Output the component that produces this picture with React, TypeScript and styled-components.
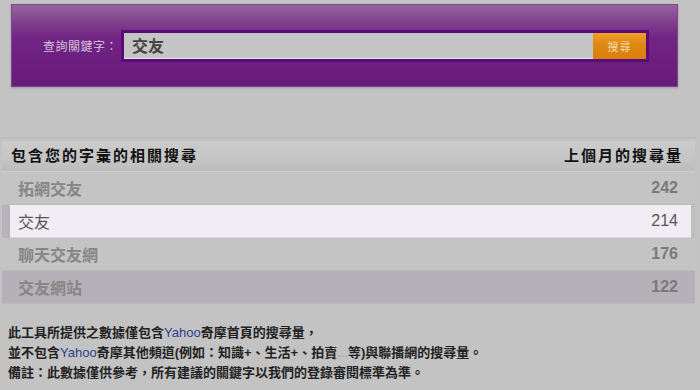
import styled, { createGlobalStyle } from "styled-components";

const GlobalStyle = createGlobalStyle`
  body {
    margin: 0;
    padding-top: 4px;
    background: #c3c3c3;
    font-family: "Liberation Sans", "Noto Sans CJK TC", sans-serif;
  }
`;

type Keyword = {
  term: string;
  count: number;
  variant: "plain" | "active" | "dark";
};

const keywords: Keyword[] = [
  { term: "拓網交友", count: 242, variant: "plain" },
  { term: "交友", count: 214, variant: "active" },
  { term: "聊天交友網", count: 176, variant: "plain" },
  { term: "交友網站", count: 122, variant: "dark" },
];

export default function App() {
  return (
    <>
      <GlobalStyle />
      <SearchPanel>
        <Label>查詢關鍵字：</Label>
        <SearchBox>
          <SearchInput defaultValue="交友" />
          <SearchButton>搜尋</SearchButton>
        </SearchBox>
      </SearchPanel>

      <Table>
        <HeaderRow>
          <HeaderCell>包含您的字彙的相關搜尋</HeaderCell>
          <HeaderCell>上個月的搜尋量</HeaderCell>
        </HeaderRow>
        {keywords.map((k) => (
          <Row key={k.term} $variant={k.variant}>
            <Term $active={k.variant === "active"}>{k.term}</Term>
            <Count $active={k.variant === "active"}>{k.count}</Count>
          </Row>
        ))}
      </Table>

      <Notes>
        <p>
          此工具所提供之數據僅包含<Brand>Yahoo</Brand>奇摩首頁的搜尋量，
        </p>
        <p>
          並不包含<Brand>Yahoo</Brand>奇摩其他頻道(例如：知識+、生活+、拍賣<Dim>...</Dim>等)與聯播網的搜尋量。
        </p>
        <p>備註：此數據僅供參考，所有建議的關鍵字以我們的登錄審閱標準為準。</p>
      </Notes>
    </>
  );
}

const SearchPanel = styled.div`
  box-sizing: border-box;
  height: 83px;
  margin: 0 22px 0 11px;
  padding-left: 31px;
  display: flex;
  align-items: center;
  gap: 3px;
  background: linear-gradient(
    to bottom,
    #94659e 0%,
    #7f3f8c 22%,
    #712584 40%,
    #6c1f7f 70%,
    #661a79 100%
  );
  border: 1px solid #7b4a86;
  box-shadow: 0 1px 2px rgba(90, 60, 95, 0.35);
`;

const Label = styled.span`
  font-size: 12px;
  color: #d4c1d8;
  letter-spacing: 0.5px;
`;

const SearchBox = styled.div`
  display: flex;
  width: 522px;
  height: 26px;
  border: 3px solid #5b0a79;
`;

const SearchInput = styled.input`
  flex: 1;
  min-width: 0;
  border: none;
  border-bottom: 1px solid #e4e4e4;
  outline: none;
  padding: 0 8px;
  background: #c5c5c5;
  font-family: "Liberation Sans", "Noto Sans CJK TC", sans-serif;
  font-size: 16px;
  font-weight: bold;
  color: #444;
`;

const SearchButton = styled.button`
  width: 53px;
  border: none;
  padding: 0;
  background: linear-gradient(to bottom, #eea02a 0%, #de8712 45%, #d9800c 100%);
  color: #f6dcb4;
  font-family: "Liberation Sans", "Noto Sans CJK TC", sans-serif;
  font-size: 11px;
  letter-spacing: 1px;
`;

const Table = styled.div`
  margin: 50px 5px 0 2px;
  background: #bfbfbf;
`;

const HeaderRow = styled.div`
  display: flex;
  justify-content: space-between;
  align-items: center;
  height: 34px;
  padding: 0 12px 0 9px;
  background: linear-gradient(to bottom, #b9b9b9 0%, #cbcbcb 15%, #c4c4c4 70%, #bcbcbc 100%);
  border-bottom: 1px solid #cfcfcf;
`;

const HeaderCell = styled.span`
  font-size: 15px;
  font-weight: bold;
  letter-spacing: 2px;
  color: #111;
`;

const Row = styled.div<{ $variant: Keyword["variant"] }>`
  display: flex;
  justify-content: space-between;
  align-items: center;
  height: 32px;
  padding: 0 17px 0 16px;
  border-bottom: 1px solid #bbbbbb;
  background: ${(p) =>
    p.$variant === "active" ? "#f2edf4" : p.$variant === "dark" ? "#b6b0b8" : "#c4c4c4"};
  ${(p) =>
    p.$variant === "active" &&
    `
    margin: 0 4px 0 8px;
    padding: 0 13px 0 8px;
    border-bottom-color: #d9d4db;
    box-shadow: -8px 0 0 #b8b3ba;
  `}
`;

const Term = styled.span<{ $active: boolean }>`
  font-size: 16px;
  font-weight: ${(p) => (p.$active ? "normal" : "bold")};
  color: ${(p) => (p.$active ? "#555" : "#868686")};
`;

const Count = styled.span<{ $active: boolean }>`
  font-size: 16px;
  font-weight: ${(p) => (p.$active ? "normal" : "bold")};
  color: ${(p) => (p.$active ? "#555" : "#7a7a7a")};
`;

const Notes = styled.div`
  margin: 19px 0 0 8px;
  font-size: 13px;
  font-weight: bold;
  color: #222;

  p {
    margin: 0;
    line-height: 20px;
  }
`;

const Brand = styled.span`
  font-weight: normal;
  color: #2d3f8e;
`;

const Dim = styled.span`
  font-weight: normal;
  color: #9a9a9a;
`;
